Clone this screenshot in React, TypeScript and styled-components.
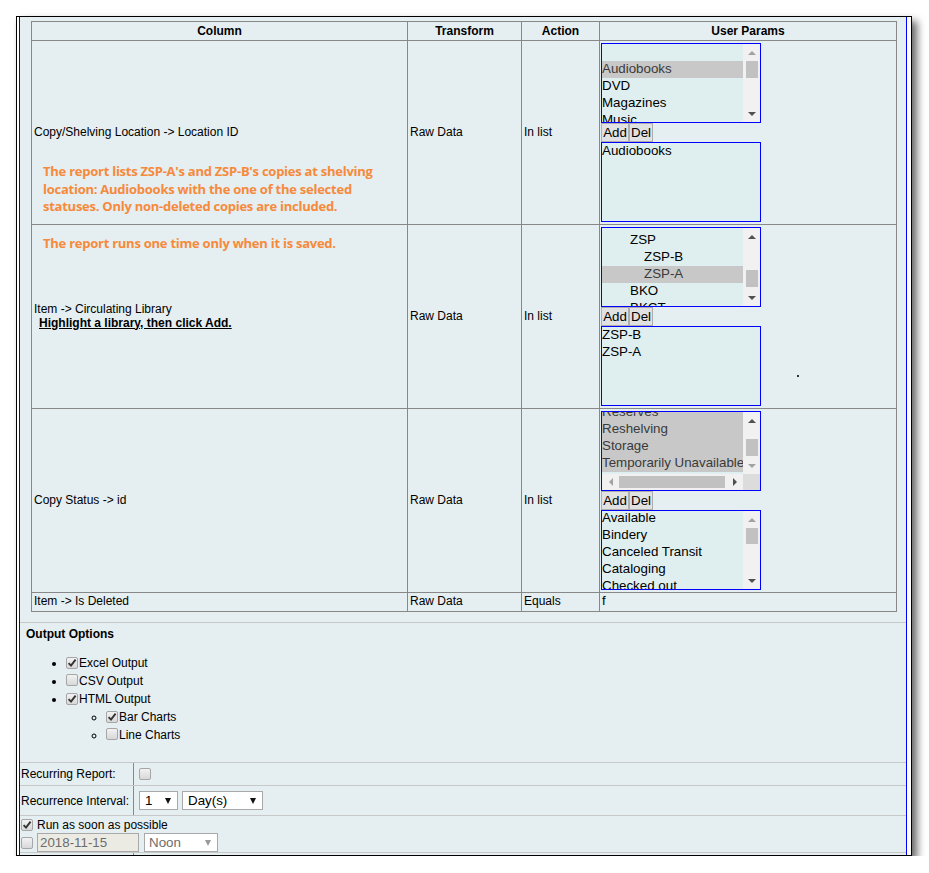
import React from 'react';
import styled, { createGlobalStyle } from 'styled-components';

const GlobalStyle = createGlobalStyle`
  html, body { margin: 0; padding: 0; background: #fff; }
  body { font-family: "Liberation Sans", Arial, sans-serif; font-size: 12px; color: #000; }
  * { box-sizing: border-box; }
`;

const Frame = styled.div`
  margin: 16px 0 0 16px;
  width: 896px;
  height: 840px;
  border: 1px solid #000;
  background: #fff;
  padding: 0 4px 0 2px;
  box-shadow: 5px 5px 8px rgba(0, 0, 0, 0.6);
  overflow: hidden;
`;

const Panel = styled.div`
  height: 100%;
  background: #e5eef0;
  border-left: 1px solid #0000ff;
  border-right: 1px solid #0000ff;
  padding-top: 4px;
`;

const ParamTable = styled.table`
  margin-left: 11px;
  width: 865px;
  border-collapse: collapse;
  table-layout: fixed;
`;

const HeadCell = styled.th`
  border: 1px solid #888;
  padding: 2px;
  font: bold 12px/14px "Liberation Sans", Arial, sans-serif;
  text-align: center;
`;

const Cell = styled.td<{ $params?: boolean }>`
  border: 1px solid #888;
  padding: ${(p) => (p.$params ? '2px 1px' : '1px 2px 3px')};
  font-size: 12px;
  line-height: 14px;
  vertical-align: middle;
  position: relative;
`;

const ValueText = styled.span<{ $size?: number }>`
  font-size: ${(p) => p.$size ?? 12}px;
`;

const Hint = styled.div`
  margin-left: 5px;
  font-weight: bold;
  text-decoration: underline;
`;

const Annotation = styled.div<{ $top: number }>`
  position: absolute;
  left: 11px;
  top: ${(p) => p.$top}px;
  font-family: "Open Sans", "Noto Sans", sans-serif;
  font-weight: 700;
  font-size: 13px;
  letter-spacing: -0.25px;
  line-height: 17.7px;
  color: #f68a3c;
  white-space: nowrap;
`;

const Speck = styled.span`
  position: absolute;
  left: 197px;
  top: 150px;
  width: 2px;
  height: 2px;
  background: #333;
`;

const ParamStack = styled.div`
  display: flex;
  flex-direction: column;
  align-items: flex-start;
`;

const ButtonRow = styled.div`
  display: flex;
  height: 19px;
`;

const SmallButton = styled.button`
  height: 19px;
  padding: 0 1px;
  margin: 0;
  border: 1px solid #adadad;
  background: #e1e1e1;
  font: 13.33px/17px "Liberation Sans", Arial, sans-serif;
  color: #000;
`;

/* ---------- list box ---------- */

const Box = styled.div<{ $vbar: boolean; $hbar: boolean }>`
  width: 160px;
  height: 80px;
  border: 1px solid #0000ff;
  background: #dfeff0;
  display: grid;
  grid-template-columns: ${(p) => (p.$vbar ? 'minmax(0, 1fr) 17px' : 'minmax(0, 1fr)')};
  grid-template-rows: ${(p) => (p.$hbar ? 'minmax(0, 1fr) 16px' : 'minmax(0, 1fr)')};
  overflow: hidden;
`;

const Viewport = styled.div`
  overflow: hidden;
  min-width: 0;
  min-height: 0;
`;

const OptionStack = styled.div<{ $shift: number }>`
  margin-top: ${(p) => p.$shift}px;
`;

const OptionRow = styled.div<{ $indent: number; $selected: boolean }>`
  height: 17px;
  line-height: 16px;
  font-size: 13.33px;
  white-space: nowrap;
  padding-left: ${(p) => p.$indent}px;
  background: ${(p) => (p.$selected ? '#c8c8c8' : 'transparent')};
  color: ${(p) => (p.$selected ? '#3a3a3a' : '#000')};
`;

const VScroll = styled.div`
  display: flex;
  flex-direction: column;
  background: #f1f1f1;
  min-height: 0;
`;

const HScroll = styled.div`
  display: flex;
  background: #f1f1f1;
  min-width: 0;
`;

const ArrowButton = styled.div<{ $horizontal?: boolean }>`
  flex: none;
  width: 17px;
  height: ${(p) => (p.$horizontal ? '16px' : '17px')};
  display: flex;
  align-items: center;
  justify-content: center;
`;

const Arrow = styled.span<{ $dir: 'up' | 'down' | 'left' | 'right'; $dim?: boolean }>`
  width: 0;
  height: 0;
  ${(p) => {
    const c = p.$dim ? '#a3a3a3' : '#505050';
    switch (p.$dir) {
      case 'up':
        return `border-left: 4px solid transparent; border-right: 4px solid transparent; border-bottom: 4px solid ${c};`;
      case 'down':
        return `border-left: 4px solid transparent; border-right: 4px solid transparent; border-top: 4px solid ${c};`;
      case 'left':
        return `border-top: 4px solid transparent; border-bottom: 4px solid transparent; border-right: 4px solid ${c};`;
      default:
        return `border-top: 4px solid transparent; border-bottom: 4px solid transparent; border-left: 4px solid ${c};`;
    }
  }}
`;

const VTrack = styled.div`
  flex: 1;
  min-height: 0;
`;

const HTrack = styled.div`
  flex: 1;
  min-width: 0;
`;

const VThumb = styled.div<{ $top: number; $size: number }>`
  margin: ${(p) => p.$top}px 0 0 3px;
  width: 12px;
  height: ${(p) => p.$size}px;
  background: #c1c1c1;
`;

const HThumb = styled.div<{ $left: number; $size: number }>`
  margin: 2px 0 0 ${(p) => p.$left}px;
  height: 12px;
  width: ${(p) => p.$size}px;
  background: #c1c1c1;
`;

const Corner = styled.div`
  background: #dcdcdc;
`;

type Opt = { label: string; indent?: number; selected?: boolean };
type VBar = { top: number; size: number; upDim?: boolean; downDim?: boolean };
type HBar = { left: number; size: number; leftDim?: boolean; rightDim?: boolean };

function Listbox({ options, shift = 0, vbar, hbar }: { options: Opt[]; shift?: number; vbar?: VBar; hbar?: HBar }) {
  return (
    <Box $vbar={!!vbar} $hbar={!!hbar}>
      <Viewport>
        <OptionStack $shift={shift}>
          {options.map((o, i) => (
            <OptionRow key={i} $indent={o.indent ?? 0} $selected={!!o.selected}>
              {o.label || '\u00a0'}
            </OptionRow>
          ))}
        </OptionStack>
      </Viewport>
      {vbar && (
        <VScroll>
          <ArrowButton>
            <Arrow $dir="up" $dim={vbar.upDim} />
          </ArrowButton>
          <VTrack>
            <VThumb $top={vbar.top} $size={vbar.size} />
          </VTrack>
          <ArrowButton>
            <Arrow $dir="down" $dim={vbar.downDim} />
          </ArrowButton>
        </VScroll>
      )}
      {hbar && (
        <HScroll>
          <ArrowButton $horizontal>
            <Arrow $dir="left" $dim={hbar.leftDim} />
          </ArrowButton>
          <HTrack>
            <HThumb $left={hbar.left} $size={hbar.size} />
          </HTrack>
          <ArrowButton $horizontal>
            <Arrow $dir="right" $dim={hbar.rightDim} />
          </ArrowButton>
        </HScroll>
      )}
      {hbar && vbar && <Corner />}
    </Box>
  );
}

function ParamPicker(props: {
  source: { options: Opt[]; shift?: number; vbar?: VBar; hbar?: HBar };
  chosen: { options: Opt[]; shift?: number; vbar?: VBar };
}) {
  return (
    <ParamStack>
      <Listbox {...props.source} />
      <ButtonRow>
        <SmallButton type="button" style={{ width: 28 }}>Add</SmallButton>
        <SmallButton type="button" style={{ width: 24 }}>Del</SmallButton>
      </ButtonRow>
      <Listbox {...props.chosen} />
    </ParamStack>
  );
}

/* ---------- checkboxes / form bits ---------- */

const CheckBox = styled.span`
  display: inline-flex;
  align-items: center;
  justify-content: center;
  flex: none;
  width: 12px;
  height: 12px;
  border: 1px solid #a6a6a6;
  border-radius: 2px;
  background: linear-gradient(#f2f2f2, #d8d8d8);
  vertical-align: -1px;
  margin: 0 1px 0 0;
`;

function Check({ on }: { on?: boolean }) {
  return (
    <CheckBox>
      {on && (
        <svg width="10" height="10" viewBox="0 0 10 10" style={{ display: 'block' }}>
          <path d="M1.6 5.2 L4 7.6 L8.6 1.6" stroke="#333" strokeWidth="1.9" fill="none" />
        </svg>
      )}
    </CheckBox>
  );
}

const OutputSection = styled.div`
  margin-top: 10px;
  border-top: 1px solid #c8c8c8;
  padding: 4px 0 0 6px;
`;

const SectionTitle = styled.div`
  font-weight: bold;
  font-size: 12px;
  line-height: 14px;
`;

const OptionList = styled.ul<{ $nested?: boolean }>`
  margin: ${(p) => (p.$nested ? '0' : '13px 0 18px')};
  padding-left: 40px;
  list-style: ${(p) => (p.$nested ? 'circle' : 'disc')};
  line-height: 18px;
  font-size: 12px;
`;

const RecurGrid = styled.div`
  border-top: 1px solid #c8c8c8;
`;

const RecurRow = styled.div<{ $h: number; $full?: boolean }>`
  display: grid;
  grid-template-columns: ${(p) => (p.$full ? '1fr' : '114px 1fr')};
  height: ${(p) => p.$h}px;
  border-bottom: 1px solid #c8c8c8;
`;

const RecurLabel = styled.div`
  display: flex;
  align-items: center;
  padding-left: 1px;
  border-right: 1px solid #888;
  font-size: 12px;
`;

const RecurValue = styled.div`
  display: flex;
  align-items: center;
  gap: 4px;
  padding-left: 5px;
`;

const RunBlock = styled.div`
  display: flex;
  flex-direction: column;
  padding-left: 1px;
`;

const RunLine = styled.div<{ $h: number }>`
  display: flex;
  align-items: center;
  gap: 3px;
  height: ${(p) => p.$h}px;
  font-size: 12px;
`;

const DropBox = styled.div<{ $w: number; $disabled?: boolean }>`
  display: flex;
  align-items: center;
  justify-content: space-between;
  width: ${(p) => p.$w}px;
  height: 19px;
  border: 1px solid #a9a9a9;
  background: #fff;
  padding: 0 6px 0 ${(p) => (p.$disabled ? 4 : 5)}px;
  font-size: 13.33px;
  color: ${(p) => (p.$disabled ? '#6d6d6d' : '#000')};
`;

const DropArrow = styled.span<{ $dim?: boolean }>`
  width: 0;
  height: 0;
  border-left: 3px solid transparent;
  border-right: 3px solid transparent;
  border-top: 6px solid ${(p) => (p.$dim ? '#9a9a9a' : '#111')};
`;

const DateField = styled.div`
  display: flex;
  align-items: center;
  width: 102px;
  height: 19px;
  border: 1px solid #a9a9a9;
  background: #ebebe4;
  padding-left: 2px;
  margin-right: 2px;
  font-size: 13.33px;
  color: #6d6d6d;
`;

/* ---------- data ---------- */

const locationSource = {
  options: [
    { label: '' },
    { label: 'Audiobooks', selected: true },
    { label: 'DVD' },
    { label: 'Magazines' },
    { label: 'Music' },
    { label: 'Reference' },
  ],
  vbar: { top: 0, size: 17, upDim: true },
};

const librarySource = {
  shift: 4,
  options: [
    { label: 'ZSP', indent: 28 },
    { label: 'ZSP-B', indent: 42 },
    { label: 'ZSP-A', indent: 42, selected: true },
    { label: 'BKO', indent: 28 },
    { label: 'BKCT', indent: 28 },
  ],
  vbar: { top: 25, size: 17 },
};

const statusSource = {
  shift: -8,
  options: [
    { label: 'Reserves', selected: true },
    { label: 'Reshelving', selected: true },
    { label: 'Storage', selected: true },
    { label: 'Temporarily Unavailable', selected: true },
  ],
  vbar: { top: 10, size: 17, downDim: true },
  hbar: { left: 0, size: 106, leftDim: true },
};

const statusChosen = {
  shift: -1,
  options: [
    { label: 'Available' },
    { label: 'Bindery' },
    { label: 'Canceled Transit' },
    { label: 'Cataloging' },
    { label: 'Checked out' },
  ],
  vbar: { top: 0, size: 16, upDim: true },
};

export default function App() {
  return (
    <>
      <GlobalStyle />
      <Frame>
        <Panel>
          <ParamTable>
            <colgroup>
              <col style={{ width: 376 }} />
              <col style={{ width: 114 }} />
              <col style={{ width: 78 }} />
              <col style={{ width: 297 }} />
            </colgroup>
            <thead>
              <tr>
                <HeadCell>Column</HeadCell>
                <HeadCell>Transform</HeadCell>
                <HeadCell>Action</HeadCell>
                <HeadCell>User Params</HeadCell>
              </tr>
            </thead>
            <tbody>
              <tr>
                <Cell>
                  Copy/Shelving Location -&gt; Location ID
                  <Annotation $top={122}>
                    The report lists ZSP-A's and ZSP-B's copies at shelving
                    <br />
                    location: Audiobooks with the one of the selected
                    <br />
                    statuses. Only non-deleted copies are included.
                  </Annotation>
                </Cell>
                <Cell>Raw Data</Cell>
                <Cell>In list</Cell>
                <Cell $params>
                  <ParamPicker source={locationSource} chosen={{ options: [{ label: 'Audiobooks' }] }} />
                </Cell>
              </tr>
              <tr>
                <Cell>
                  <Annotation $top={10}>The report runs one time only when it is saved.</Annotation>
                  <div>Item -&gt; Circulating Library</div>
                  <Hint>Highlight a library, then click Add.</Hint>
                </Cell>
                <Cell>Raw Data</Cell>
                <Cell>In list</Cell>
                <Cell $params>
                  <ParamPicker
                    source={librarySource}
                    chosen={{ options: [{ label: 'ZSP-B' }, { label: 'ZSP-A' }] }}
                  />
                  <Speck />
                </Cell>
              </tr>
              <tr>
                <Cell>Copy Status -&gt; id</Cell>
                <Cell>Raw Data</Cell>
                <Cell>In list</Cell>
                <Cell $params>
                  <ParamPicker source={statusSource} chosen={statusChosen} />
                </Cell>
              </tr>
              <tr>
                <Cell>Item -&gt; Is Deleted</Cell>
                <Cell>Raw Data</Cell>
                <Cell>Equals</Cell>
                <Cell>
                  <ValueText $size={13}>f</ValueText>
                </Cell>
              </tr>
            </tbody>
          </ParamTable>

          <OutputSection>
            <SectionTitle>Output Options</SectionTitle>
            <OptionList>
              <li>
                <Check on />Excel Output
              </li>
              <li>
                <Check />CSV Output
              </li>
              <li>
                <Check on />HTML Output
                <OptionList $nested>
                  <li>
                    <Check on />Bar Charts
                  </li>
                  <li>
                    <Check />Line Charts
                  </li>
                </OptionList>
              </li>
            </OptionList>
          </OutputSection>

          <RecurGrid>
            <RecurRow $h={23}>
              <RecurLabel>Recurring Report:</RecurLabel>
              <RecurValue>
                <Check />
              </RecurValue>
            </RecurRow>
            <RecurRow $h={30}>
              <RecurLabel>Recurrence Interval:</RecurLabel>
              <RecurValue>
                <DropBox $w={39}>
                  1<DropArrow />
                </DropBox>
                <DropBox $w={81}>
                  Day(s)<DropArrow />
                </DropBox>
              </RecurValue>
            </RecurRow>
            <RecurRow $h={37} $full>
              <RunBlock>
                <RunLine $h={17}>
                  <Check on />
                  Run as soon as possible
                </RunLine>
                <RunLine $h={19}>
                  <Check />
                  <DateField>2018-11-15</DateField>
                  <DropBox $w={74} $disabled>
                    Noon<DropArrow $dim />
                  </DropBox>
                </RunLine>
              </RunBlock>
            </RecurRow>
            <RecurRow $h={30}>
              <RecurLabel>Email notification:</RecurLabel>
              <RecurValue />
            </RecurRow>
          </RecurGrid>
        </Panel>
      </Frame>
    </>
  );
}
